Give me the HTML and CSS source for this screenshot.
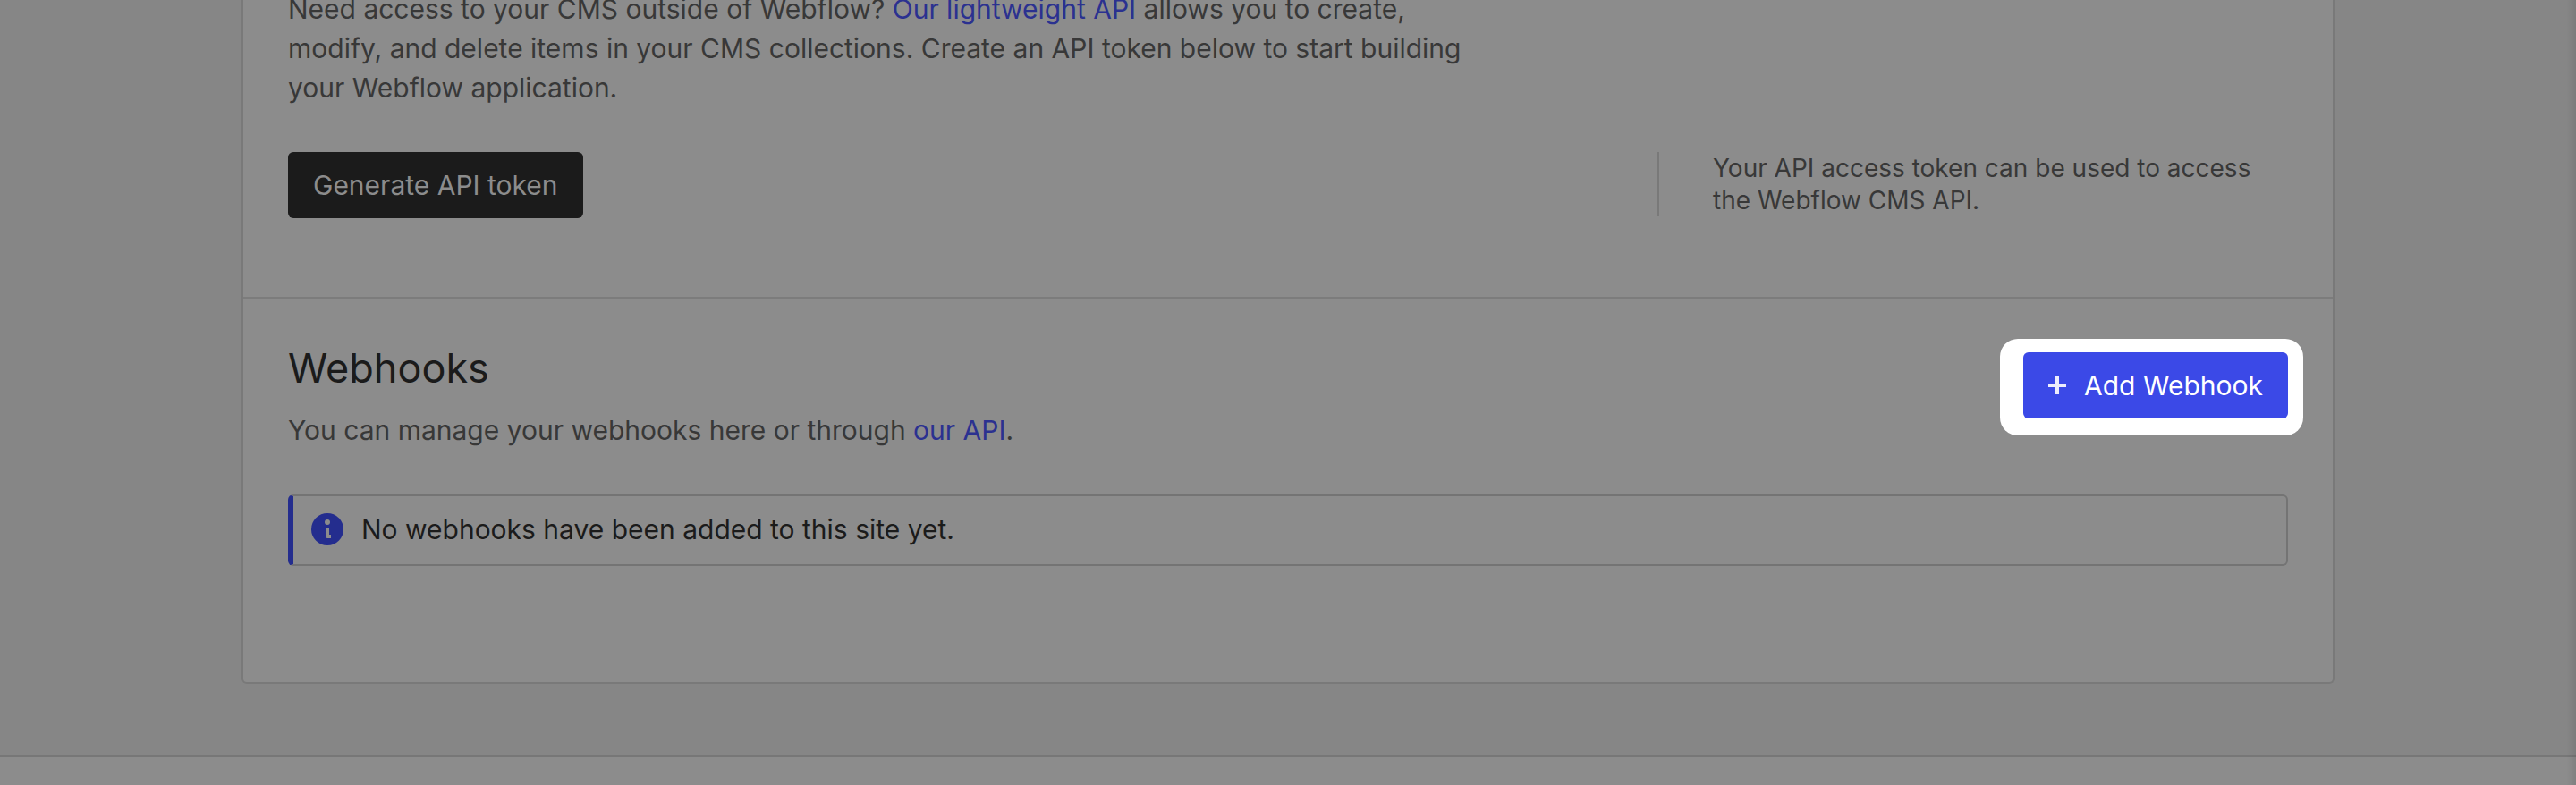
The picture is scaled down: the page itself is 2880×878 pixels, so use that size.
FILE: index.html
```html
<!DOCTYPE html>
<html lang="en">
	<head>
		<meta charset="utf-8">
		<title>Integrations</title>
		<meta name="viewport" content="width=device-width, initial-scale=1.0">
		<link rel="stylesheet" href="styles.css">
	</head>
	<body>
		<main class="card">
			<section class="section api">
				<p class="intro">
					Need access to your CMS outside of Webflow?
					<a href="#api">Our lightweight API</a> allows you to create,
					modify, and delete items in your CMS collections. Create an
					API token below to start building your Webflow application.
				</p>
				<div class="row">
					<button type="button" class="button dark">Generate API token</button>
					<p class="hint">
						Your API access token can be used to access the Webflow
						CMS API.
					</p>
				</div>
			</section>

			<section class="section webhooks">
				<div class="row">
					<div>
						<h2>Webhooks</h2>
						<p>
							You can manage your webhooks here or through
							<a href="#api">our API</a>.
						</p>
					</div>
					<div class="spotlight">
						<button type="button" class="button primary">
							<svg width="20" height="20" viewBox="0 0 20 20" aria-hidden="true">
								<path d="M8 0h4v8h8v4h-8v8H8v-8H0V8h8z" fill="#ededfc"/>
							</svg>
							Add Webhook
						</button>
					</div>
				</div>
				<div class="notice">
					<svg width="36" height="36" viewBox="0 0 36 36" aria-hidden="true">
						<circle cx="18" cy="18" r="18" fill="#242d8e"/>
						<circle cx="18" cy="10" r="3" fill="#8c8c8c"/>
						<path d="M16 16h4v8h2v4h-4q-2 0-2-2z" fill="#8c8c8c"/>
					</svg>
					<span>No webhooks have been added to this site yet.</span>
				</div>
			</section>
		</main>
		<footer></footer>
	</body>
</html>
```
FILE: styles.css
```css
* {
	box-sizing: border-box;
}

body {
	display: flex;
	flex-direction: column;
	min-height: 100vh;
	margin: 0;
	background: #868686;
	color: #383838;
	font-family: Inter, sans-serif;
	font-size: 30px;
	line-height: 44px;
}

/* soft edge down the right side of the page */
body::after {
	content: "";
	position: fixed;
	top: 0;
	right: 0;
	bottom: 0;
	width: 10px;
	background: linear-gradient(to right, transparent, rgba(0, 0, 0, 0.08));
}

h2,
p {
	margin: 0;
}

a {
	color: #2b3190;
	text-decoration: none;
}

.card {
	width: 81.25%;
	margin: -12px auto 80px;
	background: #8c8c8c;
	border: 2px solid #797979;
	border-top: none;
	border-radius: 0 0 6px 6px;
}

.section {
	padding: 0 50px;
}

.row {
	display: flex;
	justify-content: space-between;
	align-items: flex-start;
}

.api {
	padding-bottom: 88px;
	border-bottom: 2px solid #7c7c7c;
}

.intro {
	max-width: 1340px;
	margin-bottom: 50px;
}

.button {
	display: flex;
	align-items: center;
	padding: 15px 28px;
	border: none;
	border-radius: 6px;
	font: inherit;
	white-space: nowrap;
	cursor: pointer;
}

.dark {
	background: #1b1b1b;
	color: #8c8c8c;
}

.primary {
	gap: 20px;
	background: #3b49e7;
	color: #fff;
}

.hint {
	width: 705px;
	padding-left: 60px;
	border-left: 2px solid #797979;
	font-size: 28px;
	line-height: 36px;
}

.webhooks {
	padding-top: 50px;
	padding-bottom: 130px;
}

h2 {
	margin-bottom: 19px;
	color: #1b1b1b;
	font-size: 45px;
	font-weight: 400;
	line-height: 56px;
}

/* white halo that stays lit above the dimmed page */
.spotlight {
	margin: -5px -17px 0 0;
	padding: 15px 17px 19px 26px;
	background: #fff;
	border-radius: 20px;
}

.notice {
	display: flex;
	align-items: center;
	gap: 20px;
	margin-top: 50px;
	padding: 15px 20px 17px;
	border: 2px solid #747474;
	border-left: 6px solid #242d8e;
	border-radius: 6px;
	color: #1b1b1b;
}

footer {
	flex: 1;
	min-height: 33px;
	background: #8c8c8c;
	border-top: 2px solid #777;
}
```
